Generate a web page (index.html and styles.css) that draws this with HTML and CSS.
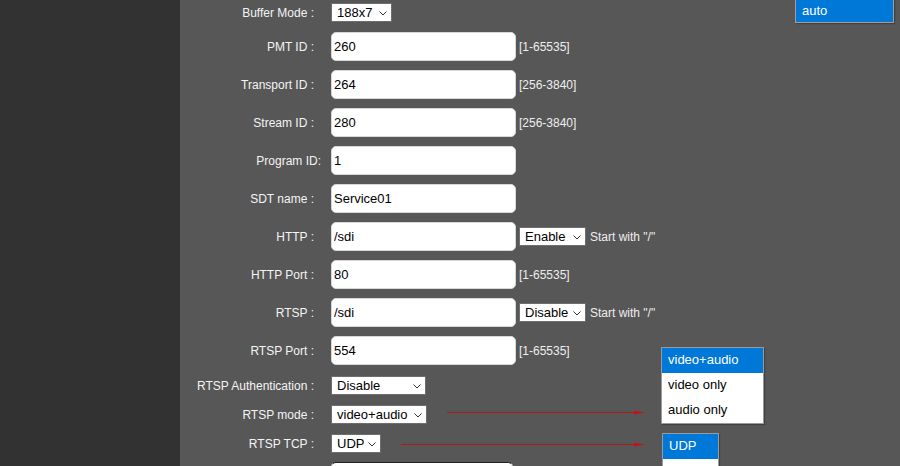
FILE: index.html
```html
<!DOCTYPE html>
<html>
<head>
    <meta name="viewport" content="width=device-width, initial-scale=1">
    <link rel="stylesheet" href="styles.css">
</head>

<body>
    <div class="page">
        <div class="sidebar"></div>

        <div class="main">
            <div class="form">
                <div class="row row-sel row-first">
                    <span class="label">Buffer Mode :</span>
                    <div class="sel w61"><span>188x7</span><svg class="chev" width="8" height="5"><polyline points="0.5,0.5 4,4 7.5,0.5" /></svg></div>
                </div>
                <div class="row">
                    <span class="label">PMT ID :</span>
                    <input class="txt" type="text" value="260">
                    <span class="hint">[1-65535]</span>
                </div>
                <div class="row">
                    <span class="label">Transport ID :</span>
                    <input class="txt" type="text" value="264">
                    <span class="hint">[256-3840]</span>
                </div>
                <div class="row">
                    <span class="label">Stream ID :</span>
                    <input class="txt" type="text" value="280">
                    <span class="hint">[256-3840]</span>
                </div>
                <div class="row">
                    <span class="label label-tight">Program ID:</span>
                    <input class="txt" type="text" value="1">
                </div>
                <div class="row">
                    <span class="label">SDT name :</span>
                    <input class="txt" type="text" value="Service01">
                </div>
                <div class="row">
                    <span class="label">HTTP :</span>
                    <input class="txt" type="text" value="/sdi">
                    <div class="sel w67 inline"><span>Enable</span><svg class="chev" width="8" height="5"><polyline points="0.5,0.5 4,4 7.5,0.5" /></svg></div>
                    <span class="hint">Start with "/"</span>
                </div>
                <div class="row">
                    <span class="label">HTTP Port :</span>
                    <input class="txt" type="text" value="80">
                    <span class="hint">[1-65535]</span>
                </div>
                <div class="row">
                    <span class="label">RTSP :</span>
                    <input class="txt" type="text" value="/sdi">
                    <div class="sel w67 inline"><span>Disable</span><svg class="chev" width="8" height="5"><polyline points="0.5,0.5 4,4 7.5,0.5" /></svg></div>
                    <span class="hint">Start with "/"</span>
                </div>
                <div class="row row-gap">
                    <span class="label">RTSP Port :</span>
                    <input class="txt" type="text" value="554">
                    <span class="hint">[1-65535]</span>
                </div>
                <div class="row row-sel">
                    <span class="label">RTSP Authentication :</span>
                    <div class="sel w95"><span>Disable</span><svg class="chev" width="8" height="5"><polyline points="0.5,0.5 4,4 7.5,0.5" /></svg></div>
                </div>
                <div class="row row-sel">
                    <span class="label">RTSP mode :</span>
                    <div class="sel w96"><span>video+audio</span><svg class="chev" width="8" height="5"><polyline points="0.5,0.5 4,4 7.5,0.5" /></svg></div>
                </div>
                <div class="row row-sel row-tcp">
                    <span class="label">RTSP TCP :</span>
                    <div class="sel w50"><span>UDP</span><svg class="chev" width="8" height="5"><polyline points="0.5,0.5 4,4 7.5,0.5" /></svg></div>
                </div>
                <div class="row">
                    <span class="label"></span>
                    <input class="txt txt-short" type="text" value="">
                </div>
            </div>

            <!-- open option lists -->
            <div class="list list-auto">
                <div class="opt on">auto</div>
            </div>
            <div class="list list-mode">
                <div class="opt on">video+audio</div>
                <div class="opt">video only</div>
                <div class="opt">audio only</div>
            </div>
            <div class="list list-tcp">
                <div class="opt on">UDP</div>
                <div class="opt"></div>
            </div>

            <!-- pointers to the lists -->
            <svg class="arrow arrow-mode" width="198" height="6">
                <line x1="0" y1="2.5" x2="189" y2="2.5" />
                <polygon points="187,0.5 198,2.5 187,4.5" />
            </svg>
            <svg class="arrow arrow-tcp" width="244" height="6">
                <line x1="0" y1="2.5" x2="235" y2="2.5" />
                <polygon points="233,0.5 244,2.5 233,4.5" />
            </svg>
        </div>
    </div>
</body>
</html>
```

FILE: styles.css
```css
html, body {
    margin: 0;
    padding: 0;
    height: 100%;
    overflow: hidden;
}

body {
    font-family: "Liberation Sans", Arial, sans-serif;
    font-size: 12px;
    color: #ffffff;
    background: #575757;
}

.page {
    display: flex;
    height: 466px;
    overflow: hidden;
}

.sidebar {
    width: 180px;
    background: #323232;
}

.main {
    flex: 1;
    position: relative;
    background: #575757;
}

.form {
    display: flex;
    flex-direction: column;
}

.row {
    display: flex;
    align-items: center;
    height: 29px;
    margin-bottom: 9px;
}

.row-first {
    margin-top: 3px;
}

.row-gap {
    margin-bottom: 11px;
}

.row-sel {
    height: 19px;
    margin-bottom: 10px;
}

.row-tcp {
    margin-bottom: 9px;
}

.label {
    width: 134px;
    margin-right: 17px;
    text-align: right;
    white-space: nowrap;
    color: #f4f4f4;
}

.label-tight {
    width: 141px;
    margin-right: 10px;
}

.txt {
    box-sizing: border-box;
    width: 185px;
    height: 29px;
    margin: 0;
    padding: 0 2px;
    border: 1px solid #d8d8d8;
    border-radius: 5px;
    background: #ffffff;
    font-family: "Liberation Sans", Arial, sans-serif;
    font-size: 13px;
    color: #000000;
    outline: none;
}

.txt-short {
    width: 182px;
    border-top-color: #222;
}

.hint {
    margin-left: 3px;
    color: #eeeeee;
    white-space: nowrap;
}

.sel {
    box-sizing: border-box;
    display: flex;
    align-items: center;
    justify-content: space-between;
    height: 19px;
    padding: 0 4px 0 5px;
    background: #ffffff;
    border: 1px solid #6e6e6e;
    font-size: 13px;
    color: #000000;
}

.sel.inline {
    margin-left: 3px;
    margin-right: 4px;
}

.sel + .hint {
    margin-left: 0;
}

.chev {
    display: block;
    margin-top: 1px;
}

.chev polyline {
    fill: none;
    stroke: #333333;
    stroke-width: 1;
}

.w50 { width: 50px; }
.w61 { width: 61px; }
.w67 { width: 67px; }
.w95 { width: 95px; }
.w96 { width: 96px; }

.list {
    position: absolute;
    box-sizing: border-box;
    background: #ffffff;
    border: 1px solid #9a9a9a;
    box-shadow: 1px 1px 1px rgba(0, 0, 0, 0.25);
    font-size: 13px;
    color: #000000;
}

.opt {
    height: 25px;
    line-height: 24px;
    padding-left: 6px;
    white-space: nowrap;
}

.opt.on {
    background: #0078d7;
    color: #ffffff;
}

.list-auto {
    left: 615px;
    top: -3px;
    width: 99px;
    border-color: #a89a94;
}

.list-auto .opt {
    height: 24px;
    line-height: 26px;
}

.list-mode {
    left: 481px;
    top: 347px;
    width: 103px;
}

.list-tcp {
    left: 482px;
    top: 433px;
    width: 57px;
}

.arrow {
    position: absolute;
    overflow: visible;
}

.arrow line {
    stroke: #b0191c;
    stroke-width: 1;
}

.arrow polygon {
    fill: #c0141a;
}

.arrow-mode {
    left: 267px;
    top: 410px;
}

.arrow-tcp {
    left: 221px;
    top: 442px;
}
```
